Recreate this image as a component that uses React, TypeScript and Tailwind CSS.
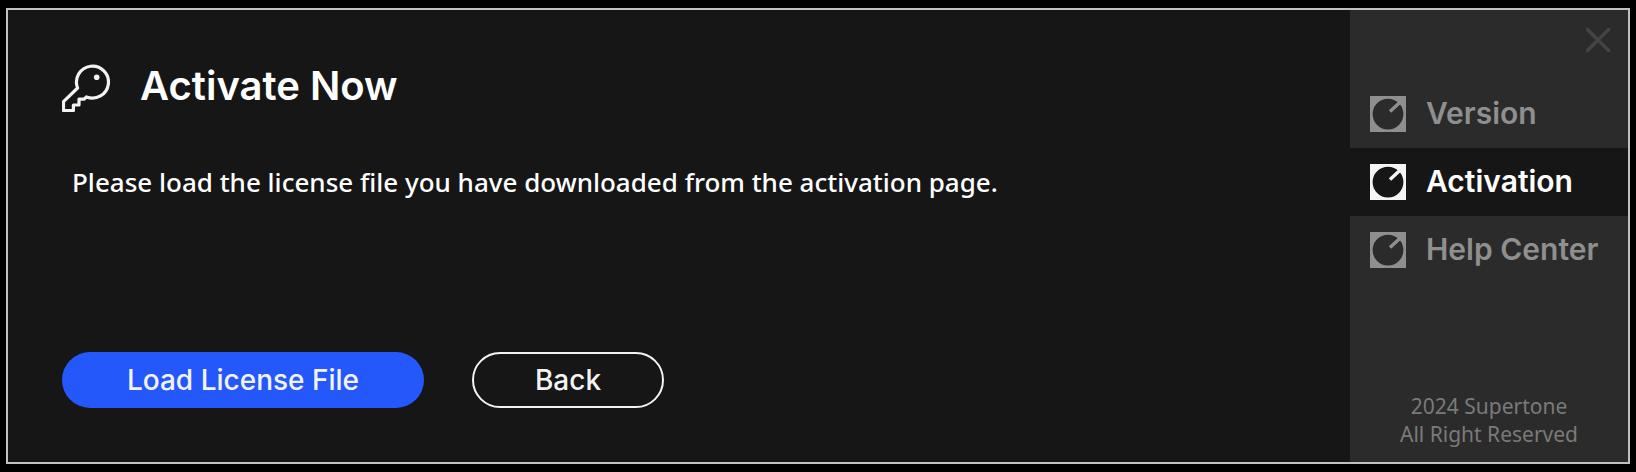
import clsx from 'clsx';

interface NavItem {
  id: string;
  label: string;
}

const NAV_ITEMS: NavItem[] = [
  { id: 'version', label: 'Version' },
  { id: 'activation', label: 'Activation' },
  { id: 'help', label: 'Help Center' },
];

function KeyIcon() {
  return (
    <svg className="w-12 h-12 shrink-0" viewBox="0 0 48 48" fill="none" aria-hidden="true">
      <path
        d="M15.6 24A16 16 0 1 1 24.4 32.9L22.2 35.2H17V41H11.4V46.5H1.5V37.6L15.6 24Z"
        stroke="#f3f3f3"
        strokeWidth={3.2}
        strokeLinejoin="round"
      />
      <circle cx="34.7" cy="13.3" r="2.8" fill="#f3f3f3" />
    </svg>
  );
}

function KnobIcon() {
  return (
    <svg className="w-9 h-9 shrink-0" viewBox="0 0 36 36" aria-hidden="true">
      <path
        fill="currentColor"
        fillRule="evenodd"
        d="M0 0H36V36H0ZM18 2.7A15.4 15.4 0 1 0 18 33.5A15.4 15.4 0 1 0 18 2.7Z"
      />
      <path stroke="currentColor" strokeWidth={3.4} d="M20 15.6L30 6.2" />
    </svg>
  );
}

function CloseIcon() {
  return (
    <svg className="w-6 h-6" viewBox="0 0 24 24" fill="none" stroke="currentColor" aria-hidden="true">
      <path strokeWidth={3.4} d="M0 0l24 24M24 0L0 24" />
    </svg>
  );
}

function Sidebar({ activeId }: { activeId: string }) {
  return (
    <aside className="w-[278px] shrink-0 flex flex-col bg-[#2b2b2b]">
      <div className="flex justify-end h-[70px] pt-[18px] pr-[18px]">
        <button type="button" aria-label="Close" className="w-6 h-6 text-[#444444]">
          <CloseIcon />
        </button>
      </div>
      <nav className="flex flex-col">
        {NAV_ITEMS.map(item => (
          <button
            key={item.id}
            type="button"
            aria-current={item.id === activeId ? 'page' : undefined}
            className={clsx(
              'flex items-center gap-5 h-[68px] px-5 text-[30px] leading-9 font-semibold whitespace-nowrap',
              item.id === activeId ? 'bg-[#161616] text-[#f5f5f5]' : 'text-[#8f8f8f]'
            )}
          >
            <KnobIcon />
            <span className={clsx('pb-0.5', item.id === activeId && 'text-white')}>{item.label}</span>
          </button>
        ))}
      </nav>
      <footer className="mt-auto pb-3.5 text-center font-['Noto_Sans',sans-serif] text-[21px] leading-7 text-[#7a7a7a]">
        <p>2024 Supertone</p>
        <p>All Right Reserved</p>
      </footer>
    </aside>
  );
}

export default function App() {
  return (
    <div className="min-h-screen flex bg-black px-1.5 py-2 font-['Inter',sans-serif] text-white">
      <div className="flex-1 flex border-2 border-[#c0c0c0] bg-[#161616]">
        <main className="flex-1 flex flex-col items-start pt-[54px] pb-[54px] px-[54px]">
          <header className="flex items-start gap-[30px]">
            <KeyIcon />
            <h1 className="text-[40px] leading-[44px] font-semibold">Activate Now</h1>
          </header>
          <p className="mt-[52px] ml-2.5 font-['Noto_Sans',sans-serif] text-[26px] leading-9 font-medium">
            Please load the license file you have downloaded from the activation page.
          </p>
          <div className="mt-auto flex gap-12">
            <button
              type="button"
              className="w-[362px] h-14 rounded-full bg-[#2458fb] text-[28px] leading-8 font-medium text-[#f3f3f3]"
            >
              Load License File
            </button>
            <button
              type="button"
              className="w-48 h-14 rounded-full border-2 border-[#f3f3f3] text-[28px] leading-8 font-medium text-[#f3f3f3]"
            >
              Back
            </button>
          </div>
        </main>
        <Sidebar activeId="activation" />
      </div>
    </div>
  );
}
